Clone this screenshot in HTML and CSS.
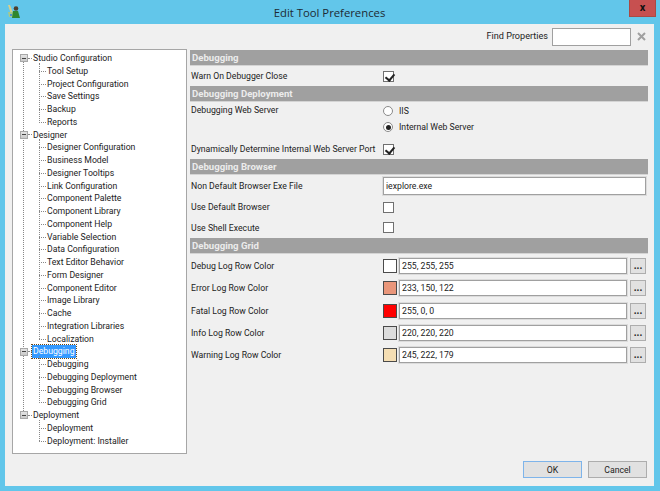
FILE: index.html
```html
<!DOCTYPE html>
<html lang="en">
<head>
    <meta charset="UTF-8">
    <title>Edit Tool Preferences</title>
    <link rel="stylesheet" href="styles.css">
</head>
<body>
    <div class="window">
        <div class="titlebar">
            <svg class="app-icon" width="13" height="13" viewBox="0 0 13 13">
                <path d="M1 0l2 0 3 8-2 1z" fill="#d8d08a"/>
                <path d="M1 7h5v5H2z" fill="#a8c98a"/>
                <rect x="3" y="9" width="2" height="2" fill="#4a8fd0"/>
                <circle cx="9" cy="3.5" r="2.3" fill="#4f3f2c"/>
                <path d="M5 13l1-7h5l2 7z" fill="#2f862f"/>
            </svg>
            <span class="title">Edit Tool Preferences</span>
            <div class="close">x</div>
        </div>

        <div class="client">
            <div class="find-row">
                <label>Find Properties</label>
                <input type="text" class="find-input">
                <svg class="find-clear" width="9" height="9" viewBox="0 0 9 9">
                    <path d="M1 1l7 7M8 1l-7 7" stroke="#a0a0a0" stroke-width="2"/>
                </svg>
            </div>

            <div class="main">
                <div class="tree">
                    <div class="node"><span class="exp"></span><span class="text">Studio Configuration</span></div>
                    <div class="kids">
                        <div class="leaf">Tool Setup</div>
                        <div class="leaf">Project Configuration</div>
                        <div class="leaf">Save Settings</div>
                        <div class="leaf">Backup</div>
                        <div class="leaf">Reports</div>
                    </div>
                    <div class="node"><span class="exp"></span><span class="text">Designer</span></div>
                    <div class="kids">
                        <div class="leaf">Designer Configuration</div>
                        <div class="leaf">Business Model</div>
                        <div class="leaf">Designer Tooltips</div>
                        <div class="leaf">Link Configuration</div>
                        <div class="leaf">Component Palette</div>
                        <div class="leaf">Component Library</div>
                        <div class="leaf">Component Help</div>
                        <div class="leaf">Variable Selection</div>
                        <div class="leaf">Data Configuration</div>
                        <div class="leaf">Text Editor Behavior</div>
                        <div class="leaf">Form Designer</div>
                        <div class="leaf">Component Editor</div>
                        <div class="leaf">Image Library</div>
                        <div class="leaf">Cache</div>
                        <div class="leaf">Integration Libraries</div>
                        <div class="leaf">Localization</div>
                    </div>
                    <div class="node"><span class="exp"></span><span class="text selected">Debugging</span></div>
                    <div class="kids">
                        <div class="leaf">Debugging</div>
                        <div class="leaf">Debugging Deployment</div>
                        <div class="leaf">Debugging Browser</div>
                        <div class="leaf">Debugging Grid</div>
                    </div>
                    <div class="node"><span class="exp"></span><span class="text">Deployment</span></div>
                    <div class="kids">
                        <div class="leaf">Deployment</div>
                        <div class="leaf">Deployment: Installer</div>
                    </div>
                </div>

                <div class="props">
                    <div class="section">Debugging</div>
                    <div class="row h-warn">
                        <span class="name">Warn On Debugger Close</span>
                        <span class="check on"></span>
                    </div>

                    <div class="section">Debugging Deployment</div>
                    <div class="row h-server">
                        <span class="name">Debugging Web Server</span>
                        <div class="radios">
                            <div class="radio-line"><span class="radio"></span>IIS</div>
                            <div class="radio-line"><span class="radio on"></span>Internal Web Server</div>
                        </div>
                    </div>
                    <div class="row h-port">
                        <span class="name">Dynamically Determine Internal Web Server Port</span>
                        <span class="check on"></span>
                    </div>

                    <div class="section">Debugging Browser</div>
                    <div class="row h-exe">
                        <span class="name">Non Default Browser Exe File</span>
                        <input type="text" class="field exe" value="iexplore.exe">
                    </div>
                    <div class="row h-opt">
                        <span class="name">Use Default Browser</span>
                        <span class="check"></span>
                    </div>
                    <div class="row h-opt">
                        <span class="name">Use Shell Execute</span>
                        <span class="check"></span>
                    </div>

                    <div class="section">Debugging Grid</div>
                    <div class="grid-rows">
                        <div class="row h-color">
                            <span class="name">Debug Log Row Color</span>
                            <span class="swatch c-white"></span>
                            <input type="text" class="field" value="255, 255, 255">
                            <button class="dots">...</button>
                        </div>
                        <div class="row h-color">
                            <span class="name">Error Log Row Color</span>
                            <span class="swatch c-salmon"></span>
                            <input type="text" class="field" value="233, 150, 122">
                            <button class="dots">...</button>
                        </div>
                        <div class="row h-color">
                            <span class="name">Fatal Log Row Color</span>
                            <span class="swatch c-red"></span>
                            <input type="text" class="field" value="255, 0, 0">
                            <button class="dots">...</button>
                        </div>
                        <div class="row h-color">
                            <span class="name">Info Log Row Color</span>
                            <span class="swatch c-grey"></span>
                            <input type="text" class="field" value="220, 220, 220">
                            <button class="dots">...</button>
                        </div>
                        <div class="row h-color">
                            <span class="name">Warning Log Row Color</span>
                            <span class="swatch c-wheat"></span>
                            <input type="text" class="field" value="245, 222, 179">
                            <button class="dots">...</button>
                        </div>
                    </div>
                </div>
            </div>

            <div class="footer">
                <button class="btn default">OK</button>
                <button class="btn">Cancel</button>
            </div>
        </div>
    </div>
</body>
</html>
```

FILE: styles.css
```css
* {
    box-sizing: border-box;
}

html, body {
    margin: 0;
    height: 100%;
}

body {
    font-family: Roboto, "Open Sans", sans-serif;
    font-size: 8.7px;
    color: #222;
    background: #62c6ea;
}

.window {
    height: 491px;
    padding: 0 6px 5px 5px;
    display: flex;
    flex-direction: column;
}

.titlebar {
    height: 24px;
    display: flex;
    align-items: center;
    justify-content: center;
    position: relative;
}

.app-icon {
    position: absolute;
    left: 2px;
    top: 5px;
}

.title {
    font-family: "Open Sans", sans-serif;
    font-size: 11.3px;
    color: #1d2a33;
}

.close {
    position: absolute;
    right: -2px;
    top: 0;
    width: 27px;
    height: 17px;
    background: #c75050;
    border: 1px solid #a94a44;
    border-top: 0;
    color: #111;
    font-weight: bold;
    font-size: 11px;
    line-height: 15px;
    text-align: center;
}

.client {
    flex: 1;
    background: #f0f0f0;
    padding: 0 6px 0 7px;
    display: flex;
    flex-direction: column;
}

.find-row {
    height: 25px;
    padding-top: 4px;
    display: flex;
    align-items: flex-start;
    justify-content: flex-end;
}

.find-row label {
    margin: 3px 4px 0 0;
    font-size: 9.1px;
}

.find-input {
    width: 79px;
    height: 18px;
    background: #fff;
    border: 1px solid #a0a0a0;
    border-radius: 0;
}

.find-clear {
    margin: 4px 2px 0 6px;
}

.main {
    height: 405px;
    display: flex;
    gap: 3px;
}

.tree {
    width: 175px;
    background: #fff;
    border: 1px solid #a6a6a6;
    padding: 2px 0 0 7px;
    line-height: 12.76px;
    position: relative;
}

/* root dotted line, stops at the Deployment node */
.tree::before {
    content: "";
    position: absolute;
    left: 10px;
    top: 12px;
    height: 353px;
    border-left: 1px dotted #888;
}

.node {
    height: 12.76px;
    display: flex;
    align-items: center;
    position: relative;
}

.exp {
    width: 8px;
    height: 8px;
    margin-right: 4px;
    background: linear-gradient(#e4e4e4, #cacaca);
    border: 1px solid #a8a8a8;
    position: relative;
    z-index: 1;
}

.exp::before {
    content: "";
    position: absolute;
    left: 1px;
    top: 2.5px;
    width: 4px;
    height: 1px;
    background: #444;
}

.exp::after {
    content: "";
    position: absolute;
    left: 7px;
    top: 2.5px;
    width: 4px;
    border-top: 1px dotted #888;
}

.text {
    padding: 0 1px;
    height: 12.76px;
}

.selected {
    background: #3399ff;
    color: #fff;
    outline: 1px dotted #6b4a1a;
}

.kids {
    padding-left: 27px;
    position: relative;
}

.kids::before {
    content: "";
    position: absolute;
    left: 19px;
    top: -2px;
    bottom: 6px;
    border-left: 1px dotted #888;
}

.leaf {
    height: 12.76px;
    position: relative;
    white-space: nowrap;
}

.leaf::before {
    content: "";
    position: absolute;
    left: -8px;
    top: 6px;
    width: 7px;
    border-top: 1px dotted #888;
}

.props {
    width: 458px;
    padding-top: 1px;
}

.section {
    height: 16px;
    background: #a0a0a0;
    border-bottom: 1px solid #d4d4d4;
    color: #ececec;
    font-weight: bold;
    font-size: 9.6px;
    line-height: 15px;
    padding-left: 2px;
}

.row {
    display: flex;
    align-items: center;
    padding: 0 2px 0 1px;
}

.name {
    width: 192px;
    flex: none;
    white-space: nowrap;
}

.h-warn {
    height: 20px;
}

.h-server {
    height: 37px;
    align-items: flex-start;
    padding-top: 3px;
}

.h-port {
    height: 20px;
}

.h-exe {
    height: 22px;
}

.h-opt {
    height: 20.5px;
}

.grid-rows {
    padding-top: 1px;
}

.h-color {
    height: 22.3px;
}

.check {
    width: 11px;
    height: 11px;
    background: #fff;
    border: 1px solid #707070;
    position: relative;
}

.check.on::after {
    content: "";
    position: absolute;
    left: 2.5px;
    top: 0;
    width: 4px;
    height: 7px;
    border: solid #222;
    border-width: 0 2px 2px 0;
    transform: rotate(40deg);
}

.radios {
    display: flex;
    flex-direction: column;
    gap: 4px;
}

.radio-line {
    height: 12px;
    display: flex;
    align-items: center;
    gap: 6px;
}

.radio {
    width: 10px;
    height: 10px;
    border: 1px solid #8a8a8a;
    border-radius: 50%;
    background: #fff;
    position: relative;
}

.radio.on::after {
    content: "";
    position: absolute;
    left: 1.5px;
    top: 1.5px;
    width: 5px;
    height: 5px;
    border-radius: 50%;
    background: #222;
}

.field {
    width: 228px;
    height: 16px;
    margin-left: 2px;
    padding: 0 2px;
    border: 1px solid #a0a0a0;
    border-radius: 0;
    box-shadow: 0 0 0 1px #dcdcdc;
    font: inherit;
    color: #222;
    background: #fff;
}

.field.exe {
    width: 263px;
    height: 18px;
    margin-left: 0;
}

.swatch {
    width: 14px;
    height: 14px;
    border: 1px solid #4a4a4a;
    flex: none;
}

.c-white { background: #fff; }
.c-salmon { background: #e9967a; }
.c-red { background: #f00; }
.c-grey { background: #dcdcdc; }
.c-wheat { background: #f5deb3; }

.dots {
    width: 16px;
    height: 16px;
    margin-left: 3px;
    padding: 0;
    background: #e1e1e1;
    border: 1px solid #adadad;
    font: bold 10px Roboto, sans-serif;
    line-height: 14px;
    color: #222;
}

.footer {
    display: flex;
    justify-content: flex-end;
    gap: 6px;
    padding-top: 7px;
    padding-right: 1px;
}

.btn {
    width: 59px;
    height: 17px;
    padding: 0;
    background: #e1e1e1;
    border: 1px solid #adadad;
    font: 8.7px Roboto, sans-serif;
    color: #222;
}

.btn.default {
    border-color: #7eb4ea;
}
```
